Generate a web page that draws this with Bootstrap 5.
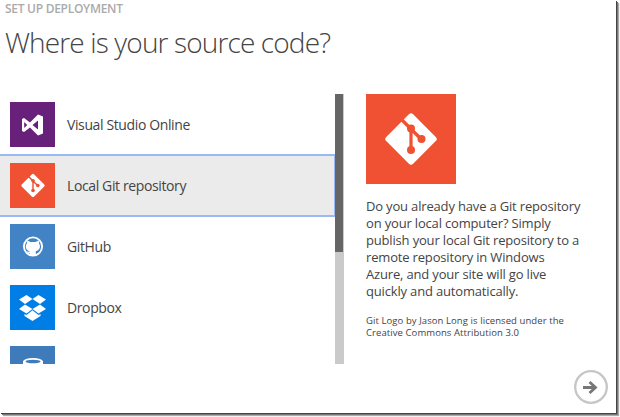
<!DOCTYPE html>
<html lang="en">
<head>
<meta charset="utf-8">
<title>Set up deployment</title>
<link href="https://cdn.jsdelivr.net/npm/bootstrap@5.3.0/dist/css/bootstrap.min.css" rel="stylesheet">
<style>
body{width:620px;height:417px;overflow:hidden;background:#fff;font-family:"Open Sans","Noto Sans",sans-serif;color:#444}
.dialog-box{width:616px;height:413px;box-shadow:1px 1px 0 #444,2px 2px 0 #777,3px 3px 1px #aaa;background:#fff}
.eyebrow{font-size:12px;line-height:18px;height:16px;font-weight:600;color:#aaa;padding-left:5px;letter-spacing:-.28px}
.headline{font-size:28px;line-height:38px;font-weight:300;color:#444;padding:7px 0 1px 5px;letter-spacing:-.86px}
.pane{height:270px;margin-top:32px}
.sources{width:344px;height:270px;overflow:hidden}
.source-list{width:335px}
.source-item{height:61px;padding:0 0 0 10px;gap:12px;font-size:14px;letter-spacing:-.38px;flex:none;line-height:20px}
.source-item.chosen{height:63px;margin:-1px 0;background:#ebebeb;border:solid #98b9f4;border-width:2px 1px 2px 0}
.source-item svg{flex:none}
.track{width:9px;background:#cacaca}
.thumb{width:8px;height:158px;background:#666}
.details{margin-left:22px;width:235px}
.description{font-size:13px;line-height:17px;margin:14px 0 0;letter-spacing:-.17px}
.credit{font-size:9.5px;line-height:12px;margin:15px 0 0;letter-spacing:.08px}
.description span,.credit span{display:block;white-space:nowrap}
.next-btn{width:34px;height:34px;margin:6px 8px 0 auto}
.next-btn svg{display:block}
</style>
<script src="https://cdn.jsdelivr.net/npm/bootstrap@5.3.0/dist/js/bootstrap.bundle.min.js"></script>
</head>
<body>
<svg width="0" height="0" class="position-absolute">
<symbol id="git" viewBox="0 0 90 90"><rect x="26" y="26" width="38" height="38" rx="3" fill="#fff" transform="rotate(45 45 45)"/><g stroke="#f05133" stroke-width="3.2" fill="none"><path d="M35 25l10 10 10 10M45 34v22"/></g><g fill="#f05133"><circle cx="45" cy="34.500" r="4"/><circle cx="55.500" cy="45" r="4"/><circle cx="45" cy="56" r="4"/></g></symbol>
</svg>
<main class="dialog-box">
<div class="eyebrow">SET UP DEPLOYMENT</div>
<h1 class="headline m-0">Where is your source code?</h1>
<div class="pane d-flex">
<div class="sources d-flex">
<div class="source-list d-flex flex-column">
<div class="source-item d-flex align-items-center"><svg width="45" height="45"><rect width="45" height="45" fill="#68217a"/><path fill="#fff" fill-rule="evenodd" d="M12 17l2-1 6 4.500 8-8 5 2v17l-5 2-8-8-6 4.500-2-1zM14.200 20v6l3-3zM22.500 23l5.500 4.500v-9z"/></svg><span>Visual Studio Online</span></div>
<div class="source-item chosen d-flex align-items-center"><svg width="45" height="45"><rect width="45" height="45" fill="#f05133"/><use href="#git" x="2.500" y="2" width="41" height="41"/></svg><span>Local Git repository</span></div>
<div class="source-item d-flex align-items-center"><svg width="45" height="45"><rect width="45" height="45" fill="#4183c4"/><circle cx="23" cy="22.500" r="9.100" fill="none" stroke="#fff" stroke-width="1.900"/><path fill="#fff" d="M17.300 16.500l3.200 1.500h5l3.200-1.500.5 3.200c1.800 3 .5 6.800-3.500 7.500l.3 4h-6v-2c-2 .2-2.500-1-3.300-2l2.300.6.8-.6c-4-.7-5-4.700-3-7.500z"/></svg><span>GitHub</span></div>
<div class="source-item d-flex align-items-center"><svg width="45" height="45"><rect width="45" height="45" fill="#007ee5"/><g fill="#fff"><path d="M16.500 10l6 4-7.500 5-6-4.500zM28.500 10l7.500 4.500-6 4.500-7.500-5zM9 24l6-4.500 7.500 4.500-6 4.500zM30 19.500l6 4.500-7.500 4.500-6-4.500zM14.500 29l2 1 6-4.800 6 4.800 2-1v2l-8 5-8-5z"/></g></svg><span>Dropbox</span></div>
<div class="source-item d-flex align-items-center"><svg width="45" height="45"><rect width="45" height="45" fill="#3f7abb"/><path fill="#fff" d="M13 15v18c0 5 20 5 20 0V15z"/><ellipse cx="23" cy="15.500" rx="10" ry="3.500" fill="#fff"/><ellipse cx="23" cy="15.500" rx="7.500" ry="1.800" fill="#3f7abb"/></svg></div>
</div>
<div class="track"><div class="thumb"></div></div>
</div>
<div class="details">
<svg class="d-block" width="90" height="90"><rect width="90" height="90" fill="#f05133"/><use href="#git" width="90" height="90"/></svg>
<p class="description"><span>Do you already have a Git repository</span><span>on your local computer? Simply</span><span>publish your local Git repository to a</span><span>remote repository in Windows</span><span>Azure, and your site will go live</span><span>quickly and automatically.</span></p>
<p class="credit"><span>Git Logo by Jason Long is licensed under the</span><span>Creative Commons Attribution 3.0</span></p>
</div>
</div>
<div class="next-btn" role="button" aria-label="Next"><svg width="34" height="34"><circle cx="17" cy="17" r="15.800" fill="none" stroke="#c6c6c6" stroke-width="2.300"/><path d="M9 17.500h12M15.500 12l6 5.500-6 5.500" fill="none" stroke="#777" stroke-width="2.800"/></svg></div>
</main>
</body>
</html>
